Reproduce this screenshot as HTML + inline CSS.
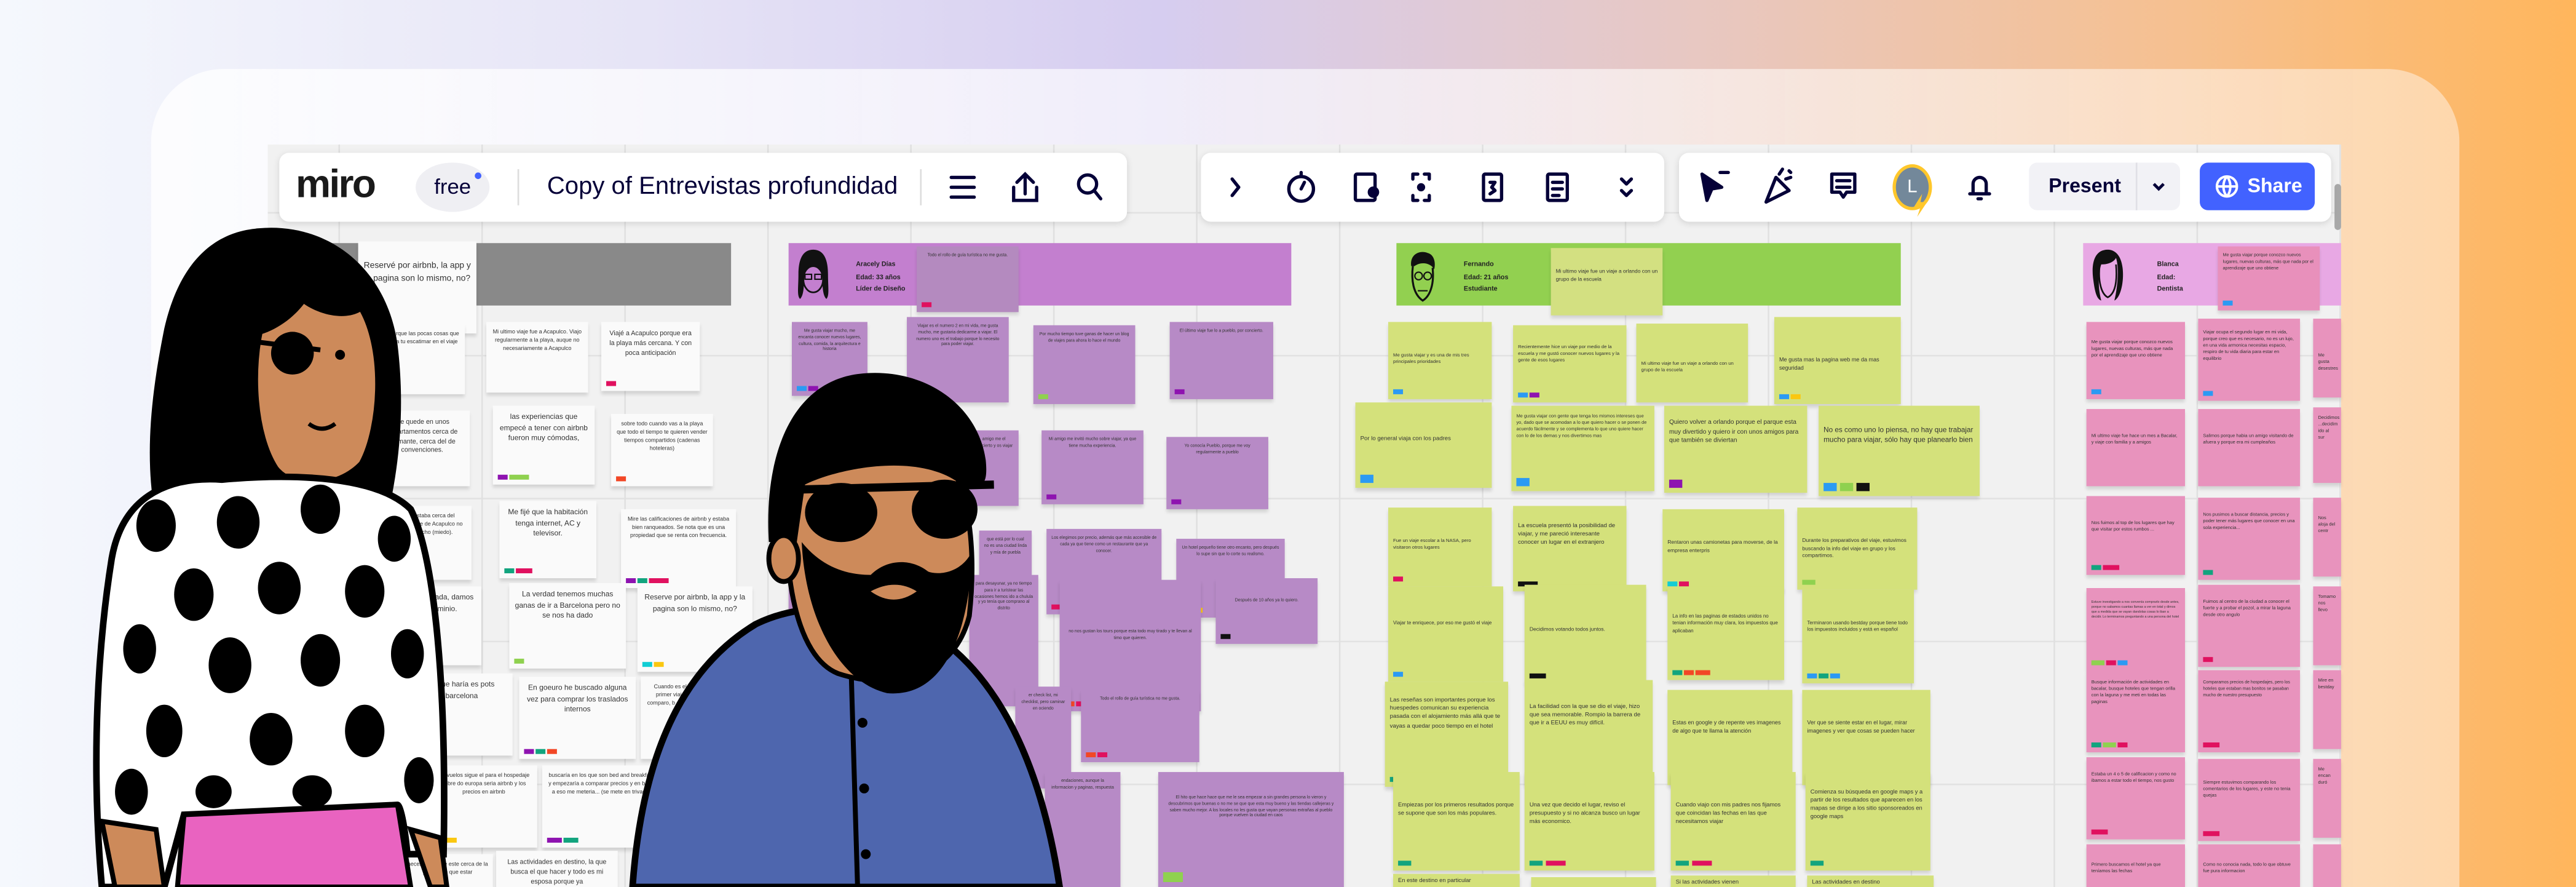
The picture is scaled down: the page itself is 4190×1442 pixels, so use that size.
<!DOCTYPE html>
<html><head><meta charset="utf-8">
<style>
*{margin:0;padding:0;box-sizing:border-box}
html,body{width:4190px;height:1442px;overflow:hidden}
body{position:relative;background:linear-gradient(90deg,#f5f8fd 0%,#e6e4f6 25%,#d6cdf0 45%,#e7c8c4 65%,#f6c08f 85%,#ffb65c 100%);font-family:"Liberation Sans",sans-serif}
#clip{position:absolute;left:0;top:0;width:4190px;height:1442px;overflow:hidden}
#st{position:absolute;left:0;top:0;width:1568px;height:540px;overflow:hidden;transform:scale(2.6722,2.6704);transform-origin:0 0}
.card{position:absolute;left:92px;top:42px;width:1405px;height:498px;border-radius:44px 44px 0 0;background:linear-gradient(90deg,rgba(255,255,255,.75),rgba(255,255,255,.6) 60%,rgba(255,240,225,.55))}
.board{position:absolute;left:163px;top:88px;width:1262px;height:452px;background-color:#f1f1f1;background-image:linear-gradient(90deg,#e0e0e0 1px,transparent 1px),linear-gradient(0deg,#e2e2e2 1px,transparent 1px);background-size:87px 87px;background-position:43px 0,0 42px;overflow:hidden}
.tb{position:absolute;top:93px;height:42px;background:#fff;border-radius:6px;box-shadow:0 1px 4px rgba(0,0,0,.12)}
.n{position:absolute;font-family:"Liberation Sans Narrow","Liberation Sans",sans-serif;font-size:3.4px;line-height:1.45;color:#333;padding:4px 3px;text-align:center;box-shadow:0 2px 2px rgba(0,0,0,.13);overflow:hidden}
.w{background:#fafafa}.p{background:#b78ac6}.g{background:#d4e17b;text-align:left}.k{background:#e893bd;text-align:left}
.n i{position:absolute;bottom:3px;width:6px;height:3.5px}
.big{font-size:5.2px}
.strip{position:absolute;top:148px;height:38px}
</style></head><body>
<div id="clip">
<div id="st">
<div class="card"></div>
<div class="board"></div>
<div class="strip" style="left:170px;width:275px;background:#898989"></div>
<div class="strip" style="left:480px;width:306px;background:#c37fcf"></div>
<div class="strip" style="left:850px;width:307px;background:#92d050"></div>
<div class="strip" style="left:1268px;width:157px;background:#e8a8e4"></div>
<div class="n w big" style="left:218px;top:147px;width:72px;height:56px;padding-top:12px">Reservé por airbnb, la app y la pagina son lo mismo, no?</div>
<svg style="position:absolute;left:484px;top:151px" width="22" height="32" viewBox="0 0 22 32"><path d="M11 1C4 1 2 8 2 16 2 24 1 29 3 31 6 28 5 20 6 14 9 10 13 10 16 14 17 20 16 28 19 31 21 29 20 24 20 16 20 8 18 1 11 1Z" fill="#111"/><ellipse cx="11" cy="19" rx="6" ry="8" fill="none" stroke="#111" stroke-width="1"/><rect x="6" y="16" width="4" height="3" fill="none" stroke="#111" stroke-width=".8"/><rect x="12" y="16" width="4" height="3" fill="none" stroke="#111" stroke-width=".8"/></svg>
<div style="position:absolute;left:521px;top:157px;font:bold 4px/1.9 'Liberation Sans Narrow',sans-serif;color:#222">Aracely Días<br>Edad: 33 años<br>Líder de Diseño</div>
<div class="n" style="left:558px;top:150px;width:62px;height:40px;background:#b48abf;font-size:2.6px">Todo el rollo de guía turística no me gusta.<i style="left:3px;background:#e0115f"></i></div>
<svg style="position:absolute;left:855px;top:152px" width="22" height="34" viewBox="0 0 22 34"><path d="M4 10C3 3 9 0 14 2 18 3 19 8 18 12 16 8 10 7 6 10Z" fill="#111"/><path d="M5 10C4 18 5 27 11 31 16 28 18 20 17 11" fill="none" stroke="#111" stroke-width="1.2"/><circle cx="8.5" cy="16" r="2.3" fill="none" stroke="#111" stroke-width=".8"/><circle cx="14" cy="16" r="2.3" fill="none" stroke="#111" stroke-width=".8"/><path d="M8 25h6" stroke="#111" stroke-width=".8"/></svg>
<div style="position:absolute;left:891px;top:157px;font:bold 4px/1.9 'Liberation Sans Narrow',sans-serif;color:#222">Fernando<br>Edad: 21 años<br>Estudiante</div>
<div class="n g" style="left:944px;top:151px;width:68px;height:41px;font-size:3.2px;padding-top:12px;background:#d3e081">Mi ultimo viaje fue un viaje a orlando con un grupo de la escuela</div>
<svg style="position:absolute;left:1272px;top:151px" width="22" height="34" viewBox="0 0 22 34"><path d="M11 1C3 1 1 9 2 18 3 26 4 31 7 32 5 24 5 16 7 10 12 10 15 8 16 6 18 12 17 24 15 32 19 30 21 20 20 12 19 4 15 1 11 1Z" fill="#111"/><path d="M6 11C5 20 7 28 11 30 15 28 17 22 16 10" fill="none" stroke="#111" stroke-width="1"/></svg>
<div style="position:absolute;left:1313px;top:157px;font:bold 4px/1.9 'Liberation Sans Narrow',sans-serif;color:#222">Blanca<br>Edad:<br>Dentista</div>
<div class="n k" style="left:1350px;top:150px;width:62px;height:39px;font-size:2.7px;background:#e890bb">Me gusta viajar porque conozco nuevos lugares, nuevas culturas, más que nada por el aprendizaje que uno obtiene<i style="left:3px;background:#2b9af3"></i></div>

<div class="n w" style="left:215px;top:197px;width:68px;height:43px">el 3er lugar, porque las pocas cosas que as durante toda tu escatimar en el viaje</div>
<div class="n w" style="left:296px;top:196px;width:62px;height:43px">Mi ultimo viaje fue a Acapulco. Viajo regularmente a la playa, auque no necesariamente a Acapulco</div>
<div class="n w" style="left:366px;top:196px;width:60px;height:42px;font-size:4px">Viajé a Acapulco porque era la playa más cercana. Y con poca anticipación<i style="left:3px;background:#e0115f"></i></div>
<div class="n w" style="left:228px;top:250px;width:58px;height:46px;font-size:4px">Me quede en unos departamentos cerca de diamante, cerca del de convenciones.</div>
<div class="n w" style="left:300px;top:247px;width:62px;height:48px;font-size:4.5px">las experiencias que empecé a tener con airbnb fueron muy cómodas,<i style="left:3px;background:#8e13b0"></i><i style="left:10px;width:12px;background:#8fd14f"></i></div>
<div class="n w" style="left:372px;top:252px;width:62px;height:44px">sobre todo cuando vas a la playa que todo el tiempo te quieren vender tiempos compartidos (cadenas hoteleras)<i style="left:3px;background:#f24726"></i></div>
<div class="n w" style="left:235px;top:308px;width:52px;height:45px">que estaba cerca del restaurante de Acapulco no me mucho (miedo).</div>
<div class="n w" style="left:304px;top:305px;width:59px;height:47px;font-size:4.5px">Me fijé que la habitación tenga internet, AC y televisor.<i style="left:3px;background:#12a47e"></i><i style="left:10px;width:10px;background:#e0115f"></i></div>
<div class="n w" style="left:378px;top:310px;width:70px;height:48px">Mire las calificaciones de airbnb y estaba bien ranqueados. Se nota que es una propiedad que se renta con frecuencia.<i style="left:3px;background:#8e13b0"></i><i style="left:10px;background:#12a47e"></i><i style="left:17px;width:12px;background:#e0115f"></i></div>
<div class="n w" style="left:238px;top:357px;width:55px;height:48px;font-size:4.5px">s tours ni nada, damos en el ominio.</div>
<div class="n w" style="left:310px;top:355px;width:71px;height:52px;font-size:4.5px">La verdad tenemos muchas ganas de ir a Barcelona pero no se nos ha dado<i style="left:3px;background:#8fd14f"></i></div>
<div class="n w" style="left:388px;top:357px;width:70px;height:52px;font-size:4.5px">Reserve por airbnb, la app y la pagina son lo mismo, no?<i style="left:3px;background:#12cdd4"></i><i style="left:10px;background:#fac710"></i></div>
<div class="n w" style="left:250px;top:410px;width:62px;height:50px;font-size:4.5px">ro que haría es pots barcelona</div>
<div class="n w" style="left:316px;top:412px;width:71px;height:50px;font-size:4.5px">En goeuro he buscado alguna vez para comprar los traslados internos<i style="left:3px;background:#8e13b0"></i><i style="left:10px;background:#12a47e"></i><i style="left:17px;background:#f24726"></i></div>
<div class="n w" style="left:390px;top:412px;width:36px;height:50px">Cuando es el primer viaje comparo, b o en la</div>
<div class="n w" style="left:262px;top:466px;width:65px;height:50px">los vuelos sigue el para el hospedaje sobre do europa seria airbnb y los precios en airbnb<i style="left:3px;background:#12a47e"></i><i style="left:10px;background:#fac710"></i></div>
<div class="n w" style="left:330px;top:466px;width:72px;height:50px">buscaría en los que son bed and breakfast y empezaría a comparar precios y en base a eso me meteria... (se mete en trivago)<i style="left:3px;width:9px;background:#8e13b0"></i><i style="left:13px;width:9px;background:#12a47e"></i></div>
<div class="n w" style="left:245px;top:520px;width:55px;height:20px">necesariamente este cerca de la pero tiene que estar</div>
<div class="n w" style="left:302px;top:518px;width:74px;height:22px;font-size:4px">Las actividades en destino, la que busca el que hacer y todo es mi esposa porque ya</div>

<div class="n p" style="left:482px;top:196px;width:46px;height:45px;font-size:2.6px">Me gusta viajar mucho, me encanta conocer nuevos lugares, cultura, comida, la arquitectura e historia<i style="left:3px;background:#2b9af3"></i><i style="left:10px;background:#8e13b0"></i></div>
<div class="n p" style="left:552px;top:193px;width:62px;height:52px;font-size:2.6px">Viajar es el numero 2 en mi vida, me gusta mucho, me gustaria dedicarme a viajar. El numero uno es el trabajo porque lo necesito para poder viajar.</div>
<div class="n p" style="left:629px;top:198px;width:62px;height:48px;font-size:2.6px">Por mucho tiempo tuve ganas de hacer un blog de viajes para ahora lo hace el mundo<i style="left:3px;background:#8fd14f"></i></div>
<div class="n p" style="left:712px;top:196px;width:63px;height:47px;font-size:2.6px">El último viaje fue lo a pueblo, por concierto.<i style="left:3px;background:#8e13b0"></i></div>
<div class="n p" style="left:590px;top:262px;width:30px;height:46px;font-size:2.6px">amigo me el concierto y os viajar</div>
<div class="n p" style="left:634px;top:262px;width:62px;height:45px;font-size:2.6px">Mi amigo me invitó mucho sobre viajar, ya que tiene mucha experiencia.<i style="left:3px;background:#8e13b0"></i></div>
<div class="n p" style="left:710px;top:266px;width:62px;height:44px;font-size:2.6px">Yo conocía Pueblo, porque me voy regularmente a pueblo<i style="left:3px;background:#8e13b0"></i></div>
<div class="n p" style="left:596px;top:323px;width:32px;height:52px;font-size:2.6px">que está por lo cual no es una ciudad linda y mía de puebla</div>
<div class="n p" style="left:637px;top:322px;width:70px;height:52px;font-size:2.6px">Los elegimos por precio, además que más accesible de cada ya que tiene como un restaurante que ya conocer.<i style="left:3px;width:10px;background:#e0115f"></i></div>
<div class="n p" style="left:716px;top:328px;width:66px;height:48px;font-size:2.6px">Un hotel pequeño tiene otro encanto, pero después lo supe sin que lo corte su realismo.<i style="left:3px;background:#111"></i><i style="left:10px;background:#fac710"></i></div>
<div class="n p" style="left:480px;top:352px;width:20px;height:48px;font-size:2.6px">Viajamos lugares</div>
<div class="n p" style="left:590px;top:350px;width:42px;height:80px;font-size:2.6px">para desayunar, ya no tiempo para ir a turistear las ocasiones hemos ido a chulula y yo tenía que comprano al distrito</div>
<div class="n p" style="left:645px;top:353px;width:86px;height:80px;font-size:2.6px;padding-top:30px">no nos gustan los tours porque esta todo muy tirado y te llevan al timo que quieren.<i style="left:3px;background:#f24726"></i><i style="left:10px;background:#e0115f"></i></div>
<div class="n p" style="left:740px;top:352px;width:62px;height:40px;font-size:2.6px;padding-top:12px">Después de 10 años ya lo quiero.<i style="left:3px;background:#111"></i></div>
<div class="n p" style="left:618px;top:418px;width:34px;height:62px;font-size:2.6px">er check list, mi checklist, pero caminar en ociendo</div>
<div class="n p" style="left:658px;top:420px;width:72px;height:44px;font-size:2.6px">Todo el rollo de guía turística no me gusta.<i style="left:3px;background:#f24726"></i><i style="left:10px;background:#e0115f"></i></div>
<div class="n p" style="left:636px;top:470px;width:46px;height:70px;font-size:2.6px">endaciones, aunque la informacion y paginas, respuesta</div>
<div class="n p" style="left:705px;top:470px;width:113px;height:70px;font-size:2.6px;padding-top:14px">El hito que hace hace que me le sea empezar a sin grandes persona lo vieron y descubrimos que buenas o no me se que que esta muy bueno y las tiendas callejeras y saben mucho mejor. A los locales no les gusta que vayan personas extrañas al pueblo porque vuelven la ciudad en caos<i style="left:3px;width:12px;height:6px;background:#8fd14f"></i></div>

<div class="n g" style="left:845px;top:196px;width:63px;height:47px;font-size:2.9px;padding-top:18px">Me gusta viajar y es una de mis tres principales prioridades<i style="left:3px;background:#2b9af3"></i></div>
<div class="n g" style="left:921px;top:198px;width:69px;height:47px;font-size:2.9px;padding-top:11px">Recientemente hice un viaje por medio de la escuela y me gustó conocer nuevos lugares y la gente de esos lugares<i style="left:3px;background:#2b9af3"></i><i style="left:10px;background:#8e13b0"></i></div>
<div class="n g" style="left:996px;top:197px;width:68px;height:48px;font-size:2.9px;padding-top:22px">Mi ultimo viaje fue un viaje a orlando con un grupo de la escuela</div>
<div class="n g" style="left:1080px;top:193px;width:77px;height:53px;font-size:3.4px;padding-top:24px">Me gusta mas la pagina web me da mas seguridad<i style="left:3px;background:#2b9af3"></i><i style="left:10px;background:#fac710"></i></div>
<div class="n g" style="left:825px;top:245px;width:83px;height:52px;font-size:3.6px;padding-top:20px">Por lo general viaja con los padres<i style="left:3px;width:8px;height:5px;background:#2b9af3"></i></div>
<div class="n g" style="left:920px;top:247px;width:87px;height:52px;font-size:2.8px">Me gusta viajar con gente que tenga los mismos intereses que yo, dado que se acomodan a lo que quiero hacer o se ponen de acuerdo fácilmente y se complementa lo que uno quiere hacer con lo de los demas y nos divertimos mas<i style="left:3px;width:8px;height:5px;background:#2b9af3"></i></div>
<div class="n g" style="left:1013px;top:247px;width:87px;height:53px;font-size:3.8px;padding-top:8px">Quiero volver a orlando porque el parque esta muy divertido y quiero ir con unos amigos para que también se diviertan<i style="left:3px;width:8px;height:5px;background:#8e13b0"></i></div>
<div class="n g" style="left:1107px;top:247px;width:98px;height:55px;font-size:4.4px;padding-top:12px">No es como uno lo piensa, no hay que trabajar mucho para viajar, sólo hay que planearlo bien<i style="left:3px;width:8px;height:5px;background:#2b9af3"></i><i style="left:13px;width:8px;height:5px;background:#8fd14f"></i><i style="left:23px;width:8px;height:5px;background:#111"></i></div>
<div class="n g" style="left:845px;top:309px;width:63px;height:48px;font-size:2.9px;padding-top:18px">Fue un viaje escolar a la NASA, pero visitaron otros lugares<i style="left:3px;background:#e0115f"></i></div>
<div class="n g" style="left:921px;top:308px;width:69px;height:52px;font-size:3.6px;padding-top:10px">La escuela presentó la posibilidad de viajar, y me pareció interesante conocer un lugar en el extranjero<i style="left:3px;width:12px;background:#111"></i></div>
<div class="n g" style="left:1012px;top:310px;width:74px;height:50px;font-size:3.2px;padding-top:18px">Rentaron unas camionetas para moverse, de la empresa enterpris<i style="left:3px;background:#12cdd4"></i><i style="left:10px;background:#e0115f"></i></div>
<div class="n g" style="left:1094px;top:309px;width:73px;height:50px;font-size:3.2px;padding-top:18px">Durante los preparativos del viaje, estuvimos buscando la info del viaje en grupo y los compartimos.<i style="left:3px;width:8px;background:#8fd14f"></i></div>
<div class="n g" style="left:845px;top:357px;width:70px;height:58px;font-size:3px;padding-top:20px">Viajar te enriquece, por eso me gustó el viaje<i style="left:3px;background:#2b9af3"></i></div>
<div class="n g" style="left:928px;top:356px;width:74px;height:60px;font-size:3.2px;padding-top:25px">Decidimos votando todos juntos.<i style="left:3px;width:10px;background:#111"></i></div>
<div class="n g" style="left:1015px;top:357px;width:71px;height:57px;font-size:3px;padding-top:16px">La info en las paginas de estados unidos no tenian información muy clara, los impuestos que aplicaban<i style="left:3px;background:#12a47e"></i><i style="left:10px;background:#f24726"></i><i style="left:17px;width:9px;background:#f24726"></i></div>
<div class="n g" style="left:1097px;top:359px;width:68px;height:57px;font-size:3px;padding-top:18px">Terminaron usando bestday porque tiene todo los impuestos incluidos y está en español<i style="left:3px;background:#2b9af3"></i><i style="left:10px;background:#12a47e"></i><i style="left:17px;background:#2b9af3"></i></div>
<div class="n g" style="left:843px;top:415px;width:75px;height:64px;font-size:3.6px;padding-top:9px">Las reseñas son importantes porque los huespedes comunican su experiencia pasada con el alojamiento más allá que te vayas a quedar poco tiempo en el hotel<i style="left:3px;width:8px;background:#12a47e"></i></div>
<div class="n g" style="left:928px;top:414px;width:78px;height:64px;font-size:3.6px;padding-top:14px">La facilidad con la que se dio el viaje, hizo que sea memorable. Rompio la barrera de que ir a EEUU es muy difícil.<i style="left:3px;width:10px;background:#e0115f"></i><i style="left:15px;background:#111"></i></div>
<div class="n g" style="left:1015px;top:420px;width:76px;height:58px;font-size:3.4px;padding-top:18px">Estas en google y de repente ves imagenes de algo que te llama la atención<i style="left:3px;width:8px;background:#12a47e"></i></div>
<div class="n g" style="left:1097px;top:420px;width:78px;height:58px;font-size:3.4px;padding-top:18px">Ver que se siente estar en el lugar, mirar imagenes y ver que cosas se pueden hacer<i style="left:3px;width:8px;background:#12a47e"></i></div>
<div class="n g" style="left:848px;top:470px;width:77px;height:60px;font-size:3.5px;padding-top:18px">Empiezas por los primeros resultados porque se supone que son los más populares.<i style="left:3px;width:8px;background:#12a47e"></i></div>
<div class="n g" style="left:928px;top:470px;width:79px;height:60px;font-size:3.5px;padding-top:18px">Una vez que decido el lugar, reviso el presupuesto y si no alcanza busco un lugar más economico.<i style="left:3px;width:8px;background:#12a47e"></i><i style="left:13px;width:12px;background:#e0115f"></i></div>
<div class="n g" style="left:1017px;top:470px;width:76px;height:60px;font-size:3.5px;padding-top:18px">Cuando viajo con mis padres nos fijamos que coincidan las fechas en las que necesitamos viajar<i style="left:3px;width:8px;background:#12a47e"></i><i style="left:13px;width:12px;background:#e0115f"></i></div>
<div class="n g" style="left:1099px;top:470px;width:76px;height:60px;font-size:3.5px;padding-top:10px">Comienza su búsqueda en google maps y a partir de los resultados que aparecen en los mapas se dirige a los sitio sponsoreados en google maps<i style="left:3px;width:8px;background:#12a47e"></i></div>
<div class="n g" style="left:848px;top:532px;width:77px;height:8px;font-size:3.5px;padding-top:2px">En este destino en particular</div>
<div class="n g" style="left:932px;top:534px;width:76px;height:6px"></div>
<div class="n g" style="left:1017px;top:533px;width:76px;height:7px;font-size:3.5px;padding-top:2px">Si las actividades vienen</div>
<div class="n g" style="left:1100px;top:533px;width:77px;height:7px;font-size:3.5px;padding-top:2px">Las actividades en destino</div>

<div class="n k" style="left:1270px;top:196px;width:60px;height:47px;font-size:2.8px;padding-top:10px">Me gusta viajar porque conozco nuevos lugares, nuevas culturas, más que nada por el aprendizaje que uno obtiene<i style="left:3px;background:#2b9af3"></i></div>
<div class="n k" style="left:1338px;top:194px;width:62px;height:50px;font-size:2.8px;padding-top:6px">Viajar ocupa el segundo lugar en mi vida, porque creo que es necesario, no es un lujo, en una vida armonica necesitas espacio, respiro de tu vida diaria para estar en equilibrio<i style="left:3px;background:#2b9af3"></i></div>
<div class="n k" style="left:1408px;top:194px;width:17px;height:48px;font-size:2.8px;padding-top:20px">Me gusta desestres</div>
<div class="n k" style="left:1270px;top:249px;width:60px;height:47px;font-size:2.8px;padding-top:14px">Mi ultimo viaje fue hace un mes a Bacalar, y viaje con familia y a amigos</div>
<div class="n k" style="left:1338px;top:249px;width:62px;height:47px;font-size:2.8px;padding-top:14px">Salimos porque habia un amigo visitando de afuera y porque era mi cumpleaños</div>
<div class="n k" style="left:1408px;top:248px;width:17px;height:46px;font-size:2.8px">Decidimos ...decidim ido al sur</div>
<div class="n k" style="left:1270px;top:302px;width:60px;height:48px;font-size:2.8px;padding-top:14px">Nos fuimos al top de los lugares que hay que visitar por estos rumbos ...<i style="left:3px;background:#12a47e"></i><i style="left:10px;width:10px;background:#e0115f"></i></div>
<div class="n k" style="left:1338px;top:303px;width:62px;height:50px;font-size:2.8px;padding-top:8px">Nos pusimos a buscar distancia, precios y poder tener más lugares que conocer en una sola experiencia...<i style="left:3px;background:#12a47e"></i></div>
<div class="n k" style="left:1408px;top:303px;width:17px;height:48px;font-size:2.8px;padding-top:10px">Nos aloja del centr</div>
<div class="n k" style="left:1270px;top:358px;width:60px;height:50px;font-size:2px;padding-top:8px">Estuve investigando a nos convenía comprarlo desde antes, porque no sabamos cuantas llamas a ver en total y dimos que a medida que se vayan dandolas cosas lo iban a decidir. Lo terminamos preguntando a una persona del hotel<i style="left:3px;width:8px;background:#8fd14f"></i><i style="left:12px;background:#e0115f"></i><i style="left:19px;background:#2b9af3"></i></div>
<div class="n k" style="left:1338px;top:356px;width:62px;height:50px;font-size:2.8px;padding-top:8px">Fuimos al centro de la ciudad a conocer el fuerte y a probar el pozol, a mirar la laguna desde otro angulo<i style="left:3px;background:#e0115f"></i></div>
<div class="n k" style="left:1408px;top:357px;width:17px;height:48px;font-size:2.8px">Tomamo nos llevo</div>
<div class="n k" style="left:1270px;top:408px;width:60px;height:50px;font-size:2.8px;padding-top:5px">Busque información de actividades en bacalar, busque hoteles que tengan orilla con la laguna y me meti en todas las paginas<i style="left:3px;background:#12a47e"></i><i style="left:10px;width:8px;background:#8fd14f"></i><i style="left:19px;background:#e0115f"></i></div>
<div class="n k" style="left:1338px;top:408px;width:62px;height:50px;font-size:2.6px;padding-top:6px">Comparamos precios de hospedajes, pero los hoteles que estaban mas bonitos se pasaban mucho de nuestro presupuesto<i style="left:3px;width:10px;background:#e0115f"></i></div>
<div class="n k" style="left:1408px;top:408px;width:17px;height:48px;font-size:2.8px">Mire en bestday</div>
<div class="n k" style="left:1270px;top:461px;width:60px;height:50px;font-size:2.8px;padding-top:8px">Estaba un 4 o 5 de calificacion y como no ibamos a estar todo el tiempo, nos gusto<i style="left:3px;width:10px;background:#e0115f"></i></div>
<div class="n k" style="left:1338px;top:462px;width:62px;height:50px;font-size:2.8px;padding-top:12px">Siempre estuvimos comparando los comentarios de los lugares, y este no tenia quejas<i style="left:3px;width:10px;background:#e0115f"></i></div>
<div class="n k" style="left:1408px;top:462px;width:17px;height:48px;font-size:2.8px">Me encan duró</div>
<div class="n k" style="left:1270px;top:514px;width:60px;height:26px;font-size:2.8px;padding-top:10px">Primero buscamos el hotel ya que teníamos las fechas</div>
<div class="n k" style="left:1338px;top:514px;width:62px;height:26px;font-size:2.8px;padding-top:10px">Como no conocia nada, todo lo que obtuve fue pura informacion</div>
<div class="n k" style="left:1408px;top:514px;width:17px;height:26px"></div>

<div style="position:absolute;left:1421px;top:112px;width:4px;height:28px;border-radius:2px;background:#a8a8a8"></div>

<div class="tb" style="left:170px;width:516px"></div>
<div class="tb" style="left:731px;width:282px"></div>
<div class="tb" style="left:1022px;width:397px"></div>
<div style="position:absolute;left:180px;top:99px;font:bold 24px 'Liberation Sans',sans-serif;letter-spacing:-1px;color:#1a1a1a">miro</div>
<div style="position:absolute;left:253px;top:99px;width:45px;height:30px;border-radius:50%;background:#efeff3;font:13px/30px 'Liberation Sans',sans-serif;color:#050038;text-align:center">free</div>
<div style="position:absolute;left:289px;top:105px;width:4px;height:4px;border-radius:50%;background:#4262ff"></div>
<div style="position:absolute;left:315px;top:103px;width:1px;height:22px;background:#ddd"></div>
<div style="position:absolute;left:333px;top:105px;font:15px 'Liberation Sans',sans-serif;color:#050038">Copy of Entrevistas profundidad</div>
<div style="position:absolute;left:560px;top:103px;width:1px;height:22px;background:#ddd"></div>
<svg style="position:absolute;left:576px;top:104px" width="100" height="20" viewBox="0 0 100 20" fill="none" stroke="#050038" stroke-width="2" stroke-linecap="round"><path d="M3 4h14M3 10h14M3 16h14"/><path d="M48 2v12M43 7l5-5 5 5M41 10v8h14v-8"/><circle cx="86" cy="8" r="5.5"/><path d="M90 12l4 5"/></svg>
<svg style="position:absolute;left:744px;top:103px" width="260" height="22" viewBox="0 0 260 22" fill="none" stroke="#050038" stroke-width="2" stroke-linecap="round" stroke-linejoin="round">
<path d="M6 6l4 5-4 5"/>
<circle cx="48" cy="12" r="7.5"/><path d="M48 2v2M48 12l2-4"/>
<rect x="81" y="3" width="12" height="16" rx="1"/><circle cx="92" cy="14" r="2.5" fill="#050038"/>
<path d="M119 3h-3v3M123 3h3v3M119 19h-3v-3M123 19h3v-3"/><circle cx="121" cy="11" r="2.5" fill="#050038" stroke="none"/>
<rect x="159" y="3" width="11" height="16" rx="1"/><path d="M163 8h3l-2 3 2 2-3 2"/>
<rect x="198" y="3" width="12" height="16" rx="1"/><path d="M201 8h6M201 12h6M201 16h4"/>
<path d="M243 6l3 3 3-3M243 13l3 3 3-3"/></svg>
<svg style="position:absolute;left:1033px;top:101px" width="190" height="26" viewBox="0 0 190 26" fill="none" stroke="#050038" stroke-width="2" stroke-linecap="round" stroke-linejoin="round">
<path d="M3 5l12 8-6 1-3 7z" fill="#050038"/><path d="M14 4h5"/>
<path d="M42 22l6-15 8 8zM50 5l2-3M54 8l3-1M56 3l1 1"/>
<path d="M82 5h14v11h-5l-2 3-2-3h-5z"/><path d="M85 9h8M85 13h8"/>
<path d="M166 17h12M168 17v-6a4 4 0 018 0v6M171 20h2"/></svg>
<div style="position:absolute;left:1152px;top:100px;width:24px;height:28px;border-radius:50%;background:#73889a;border:2px solid #ffc72b;color:#fff;font:11px/24px 'Liberation Sans',sans-serif;text-align:center">L</div>
<svg style="position:absolute;left:1164px;top:118px" width="10" height="14" viewBox="0 0 10 14"><path d="M6 0L1 8h4l-2 6 6-9H5z" fill="#ffc72b"/></svg>
<div style="position:absolute;left:1235px;top:99px;width:92px;height:29px;border-radius:5px;background:#f2f2f6"></div>
<div style="position:absolute;left:1300px;top:99px;width:1px;height:29px;background:#e0e0e6"></div>
<div style="position:absolute;left:1247px;top:106px;font:bold 12px 'Liberation Sans',sans-serif;color:#050038">Present</div>
<svg style="position:absolute;left:1308px;top:108px" width="12" height="12" viewBox="0 0 12 12"><path d="M3 4l3 3 3-3" fill="none" stroke="#050038" stroke-width="1.8"/></svg>
<div style="position:absolute;left:1339px;top:99px;width:70px;height:29px;border-radius:5px;background:#4262ff"></div>
<svg style="position:absolute;left:1348px;top:106px" width="15" height="15" viewBox="0 0 16 16" fill="none" stroke="#fff" stroke-width="1.6"><circle cx="8" cy="8" r="6.5"/><path d="M1.5 8h13M8 1.5c-3 3.5-3 9.5 0 13M8 1.5c3 3.5 3 9.5 0 13"/></svg>
<div style="position:absolute;left:1368px;top:106px;font:bold 12px 'Liberation Sans',sans-serif;color:#fff">Share</div>

<svg style="position:absolute;left:0;top:0" width="300" height="540" viewBox="0 0 300 540">
<path d="M150 140C195 132 235 160 242 210 248 260 240 300 232 330L100 335C85 290 92 240 100 200 108 165 125 145 150 140Z" fill="#000"/>
<path d="M160 195C168 170 200 165 218 185 235 210 232 260 220 282 205 298 178 298 168 285 155 265 152 225 160 195Z" fill="#cd8a5a" stroke="#000" stroke-width="3"/>
<path d="M150 175C175 160 205 165 222 188 212 196 195 192 185 185 175 198 160 205 150 205Z" fill="#000"/>
<circle cx="178" cy="215" r="13" fill="#000"/><path d="M155 208l40 5" stroke="#000" stroke-width="3"/>
<circle cx="207" cy="216" r="3" fill="#000"/><path d="M188 258q8 6 16 0" fill="none" stroke="#000" stroke-width="2.5"/>
<path d="M68 340C75 300 105 290 135 292 180 288 230 290 250 310 265 340 272 420 270 520L248 520C245 490 242 490 242 490L112 496 100 540 62 540C55 460 60 390 68 340Z" fill="#fff" stroke="#000" stroke-width="4"/>
<g fill="#000"><ellipse cx="95" cy="320" rx="12" ry="16"/><ellipse cx="145" cy="318" rx="13" ry="16"/><ellipse cx="195" cy="310" rx="12" ry="15"/><ellipse cx="240" cy="328" rx="10" ry="14"/><ellipse cx="118" cy="362" rx="12" ry="16"/><ellipse cx="170" cy="358" rx="13" ry="16"/><ellipse cx="222" cy="360" rx="12" ry="16"/><ellipse cx="85" cy="395" rx="10" ry="15"/><ellipse cx="140" cy="405" rx="13" ry="17"/><ellipse cx="195" cy="402" rx="12" ry="16"/><ellipse cx="248" cy="398" rx="10" ry="15"/><ellipse cx="100" cy="445" rx="11" ry="16"/><ellipse cx="165" cy="450" rx="13" ry="16"/><ellipse cx="222" cy="445" rx="12" ry="16"/><ellipse cx="80" cy="482" rx="10" ry="14"/><ellipse cx="255" cy="475" rx="9" ry="14"/><ellipse cx="130" cy="482" rx="11" ry="10"/><ellipse cx="190" cy="482" rx="12" ry="10"/></g>
<path d="M112 496L242 490 250 540 108 540Z" fill="#e963c0" stroke="#000" stroke-width="3"/>
<path d="M62 500L70 540 100 540 95 505Z" fill="#cd8a5a" stroke="#000" stroke-width="3"/>
<path d="M250 505L262 540 272 540 268 510Z" fill="#cd8a5a" stroke="#000" stroke-width="3"/>
</svg>
<svg style="position:absolute;left:380px;top:200px" width="290" height="340" viewBox="0 0 290 340">
<path d="M5 340C10 270 30 210 80 180 110 165 150 170 165 175 210 190 250 240 265 340Z" fill="#4e66ae" stroke="#000" stroke-width="4"/>
<path d="M120 172L140 205 160 172" fill="#3e559e" stroke="#000" stroke-width="3"/>
<path d="M138 205L142 340" stroke="#000" stroke-width="3"/>
<circle cx="145" cy="240" r="3" fill="#000"/><circle cx="146" cy="280" r="3" fill="#000"/><circle cx="147" cy="320" r="3" fill="#000"/>
<path d="M100 90C100 55 140 50 175 60 210 75 215 130 210 175 200 215 160 220 130 210 105 200 95 150 100 90Z" fill="#cd8a5a" stroke="#000" stroke-width="3"/>
<path d="M88 130C85 80 100 35 140 28 180 22 215 45 220 80 222 100 215 95 205 95 180 75 130 85 110 95L105 130Z" fill="#000"/>
<ellipse cx="97" cy="140" rx="9" ry="14" fill="#cd8a5a" stroke="#000" stroke-width="3"/>
<path d="M106 98L225 95" stroke="#000" stroke-width="5"/>
<ellipse cx="132" cy="112" rx="22" ry="18" fill="#000"/><ellipse cx="195" cy="110" rx="20" ry="18" fill="#000"/>
<path d="M108 130C110 175 130 215 160 222 195 225 210 185 212 135 205 150 190 150 185 148 175 140 160 140 150 150 135 150 120 145 108 130Z" fill="#000"/>
<path d="M150 160q15 -8 28 0q-14 10 -28 0Z" fill="#cd8a5a"/>
</svg>
</div>
</div>
</body></html>
